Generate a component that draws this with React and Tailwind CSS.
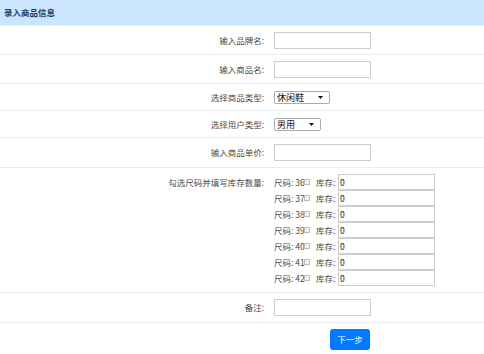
import React from 'react';

const font = { fontFamily: '"Noto Sans CJK SC", "Noto Sans", sans-serif' };

function Row({ label, children, className = '' }) {
    return (
        <div className={`flex border-t border-[#e9ecef] ${className}`}>
            <div className="w-[265px] text-right pr-[1px] text-[#4a4a4a]">{label}</div>
            <div className="pl-[9px]">{children}</div>
        </div>
    );
}

function TextBox() {
    return <input className="block w-[97px] h-[17px] border border-[#ccc] bg-white outline-none" />;
}

function Select({ value, width }) {
    return (
        <div className={`flex items-center justify-between h-[13px] ${width} border border-[#aaa] rounded-[2px] bg-white pl-[2px] pr-[6px]`}>
            <span className="text-[9px] text-[#111] whitespace-nowrap">{value}</span>
            <svg width="5" height="3" viewBox="0 0 5 3">
                <path d="M0 0 L5 0 L2.5 3 Z" fill="#111" />
            </svg>
        </div>
    );
}

const sizes = [36, 37, 38, 39, 40, 41, 42];

export default function App() {
    return (
        <div className="w-[484px] h-[354px] bg-white text-[8.5px] leading-none" style={font}>
            {/* Header */}
            <div className="h-[25px] bg-[#cce5ff] flex items-center pl-[4px]">
                <span className="font-bold text-[8.5px] text-[#1b3c66]">录入商品信息</span>
            </div>

            <Row label="输入品牌名:" className="h-[29px] items-center">
                <TextBox />
            </Row>
            <Row label="输入商品名:" className="h-[29px] items-center">
                <TextBox />
            </Row>
            <Row label="选择商品类型:" className="h-[27px] items-center">
                <Select value="休闲鞋" width="w-[56px]" />
            </Row>
            <Row label="选择用户类型:" className="h-[27px] items-center">
                <Select value="男用" width="w-[47px]" />
            </Row>
            <Row label="输入商品单价:" className="h-[30px] items-center">
                <TextBox />
            </Row>

            {/* Sizes */}
            <div className="flex border-t border-[#e9ecef] h-[125px] pt-[6px]">
                <div className="w-[265px] text-right pr-[1px] text-[#4a4a4a] pt-[4px]">勾选尺码并填写库存数量:</div>
                <div className="pl-[9px] flex flex-col">
                    {sizes.map((s) => (
                        <div key={s} className="flex items-center h-[16px]">
                            <span className="text-[#4a4a4a] w-[30px] whitespace-nowrap">尺码: {s}</span>
                            <span className="w-[6px] h-[6px] border border-[#bbb] bg-[#f3f3f3]" />
                            <span className="text-[#4a4a4a] ml-[6px] w-[22px] whitespace-nowrap">库存:</span>
                            <input
                                defaultValue="0"
                                className="w-[97px] h-[16px] border border-[#ccc] bg-white outline-none text-[8.5px] pl-[1px] text-[#111]"
                            />
                        </div>
                    ))}
                </div>
            </div>

            <Row label="备注:" className="h-[30px] items-center">
                <TextBox />
            </Row>

            {/* Button */}
            <div className="flex border-t border-[#e9ecef] pt-[6px] pl-[330px]">
                <button className="w-[40px] h-[21px] bg-[#007bff] text-white rounded-[3px] text-[8.5px]">下一步</button>
            </div>
        </div>
    );
}
